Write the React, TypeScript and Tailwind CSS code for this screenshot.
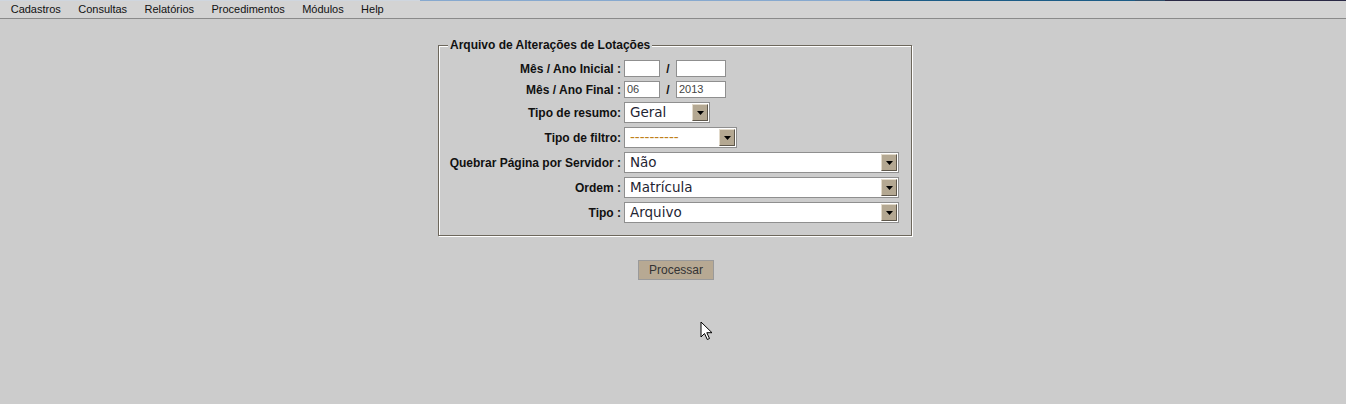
import React from "react";

const menu = ["Cadastros", "Consultas", "Relatórios", "Procedimentos", "Módulos", "Help"];

function Arrow() {
  return (
    <div className="flex h-full w-[16px] items-center justify-center border border-t-[#e2dacb] border-l-[#e2dacb] border-b-[#5e574b] border-r-[#5e574b] bg-[#b4a892]">
      <svg width="7" height="4" viewBox="0 0 7 4">
        <path d="M0 0h7L3.5 4z" fill="#000" />
      </svg>
    </div>
  );
}

function Select({ w, value, dashed }: { w: string; value: string; dashed?: boolean }) {
  return (
    <div className={`flex h-[21px] ${w} items-stretch border border-[#8f8f8f] bg-white p-px`}>
      <div className="flex flex-1 items-center pl-[4px]">
        {dashed ? (
          <span className="font-['DejaVu_Sans',sans-serif] text-[13.5px] leading-none text-[#c0801a]">----------</span>
        ) : (
          <span className="font-['DejaVu_Sans',sans-serif] text-[13.5px] leading-none text-[#1f2533]">{value}</span>
        )}
      </div>
      <Arrow />
    </div>
  );
}

function Input({ w, value }: { w: string; value?: string }) {
  return (
    <div className={`flex h-[17px] ${w} items-center border border-[#8f8f8f] bg-white pl-[2px] font-['Liberation_Sans',sans-serif] text-[11px] leading-none text-[#444]`}>
      {value}
    </div>
  );
}

function Label({ children }: { children: React.ReactNode }) {
  return (
    <div className="flex items-center justify-end pr-[3px] font-['Liberation_Sans',sans-serif] text-[12px] font-bold leading-none text-[#111]">
      {children}
    </div>
  );
}

export default function App() {
  return (
    <div className="min-h-[404px] w-full bg-[#cccccc] font-['Liberation_Sans',sans-serif]">
      <div className="flex h-px w-full">
        <div className="w-[420px] bg-[#cfd6df]" />
        <div className="w-[450px] bg-[#87a9cf]" />
        <div className="w-[265px] bg-[#1c5c86]" />
        <div className="w-[30px] bg-[#2f4f6c]" />
        <div className="flex-1 bg-[#2a2945]" />
      </div>
      <div className="flex h-[18px] items-center border-b border-[#8a8a8a] bg-[#d3d3d3] pl-[2px]">
        {menu.map((m) => (
          <span key={m} className="px-[8.7px] text-[11px] leading-none text-[#111]">
            {m}
          </span>
        ))}
      </div>

      <div className="mt-[20px] flex justify-center pl-[4px]">
        <fieldset className="w-[474px] border border-[#6d675c] pb-[12px] shadow-[inset_1px_1px_0_#ffffff,1px_1px_0_#ffffff]">
          <legend className="ml-[9px] bg-[#cccccc] px-[2px] text-[12px] font-bold leading-[13px] text-[#111]">
            Arquivo de Alterações de Lotações
          </legend>
          <div className="mt-[8px] grid grid-cols-[185px_1fr] gap-y-[4px]">
            <Label>Mês / Ano Inicial :</Label>
            <div className="flex items-center">
              <Input w="w-[36px]" />
              <span className="w-[16px] text-center text-[12px] font-bold leading-none text-[#111]">/</span>
              <Input w="w-[50px]" />
            </div>
            <Label>Mês / Ano Final :</Label>
            <div className="flex items-center">
              <Input w="w-[36px]" value="06" />
              <span className="w-[16px] text-center text-[12px] font-bold leading-none text-[#111]">/</span>
              <Input w="w-[50px]" value="2013" />
            </div>
            <Label>Tipo de resumo:</Label>
            <Select w="w-[86px]" value="Geral" />
            <Label>Tipo de filtro:</Label>
            <Select w="w-[113px]" value="" dashed />
            <Label>Quebrar Página por Servidor :</Label>
            <Select w="w-[275px]" value="Não" />
            <Label>Ordem :</Label>
            <Select w="w-[275px]" value="Matrícula" />
            <Label>Tipo :</Label>
            <Select w="w-[275px]" value="Arquivo" />
          </div>
        </fieldset>
      </div>

      <div className="mt-[24px] flex justify-center pl-[6px]">
        <button className="h-[20px] w-[76px] border border-[#9a9a9a] bg-[#b7a993] text-[12px] leading-none text-[#333]">
          Processar
        </button>
      </div>

      <svg className="absolute left-[700px] top-[321px]" width="13" height="20" viewBox="0 0 13 20">
        <path d="M1 1v15l3.5-3.5 2.8 6 2.2-1-2.7-5.8H12z" fill="#fff" stroke="#000" strokeWidth="1" strokeLinejoin="round" />
      </svg>
    </div>
  );
}
